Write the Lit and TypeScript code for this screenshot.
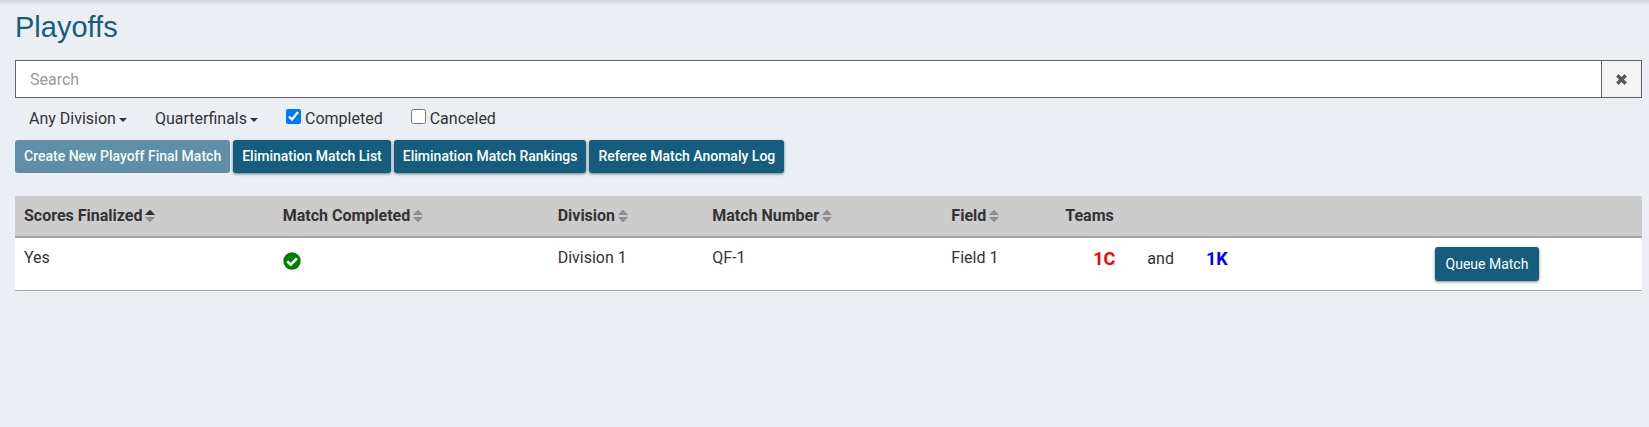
import { LitElement, html, css, svg } from "lit";
import { customElement, property } from "lit/decorators.js";

@customElement("sort-icon")
class SortIcon extends LitElement {
  @property({ type: Boolean }) ascending = false;

  static styles = css`
    :host {
      display: inline-block;
    }
    svg {
      display: block;
    }
    .arrow {
      fill: #8f8f8f;
    }
    .active {
      fill: #333;
    }
  `;

  render() {
    return html`<svg width="10" height="14" viewBox="0 0 10 14" aria-hidden="true">
      <path class="arrow ${this.ascending ? "active" : ""}" d="M.6 6 Q0 6 .3 5.4 L4.6 1.1 Q5 .7 5.4 1.1 L9.7 5.4 Q10 6 9.4 6Z" />
      <path class="arrow" d="M.6 8 Q0 8 .3 8.6 L4.6 12.9 Q5 13.3 5.4 12.9 L9.7 8.6 Q10 8 9.4 8Z" />
    </svg>`;
  }
}

interface Match {
  finalized: string;
  division: string;
  number: string;
  field: string;
  red: string;
  blue: string;
}

const columns = ["Scores Finalized", "Match Completed", "Division", "Match Number", "Field"];

const matches: Match[] = [
  { finalized: "Yes", division: "Division 1", number: "QF-1", field: "Field 1", red: "1C", blue: "1K" },
];

const cross = svg`<path d="M2.6 .4 5.5 3.3 8.4 .4 10.6 2.6 7.7 5.5 10.6 8.4 8.4 10.6 5.5 7.7 2.6 10.6 .4 8.4 3.3 5.5 .4 2.6Z"
  fill="#555" stroke="#555" stroke-width=".6" stroke-linejoin="round" />`;

@customElement("app-root")
class AppRoot extends LitElement {
  static styles = css`
    :host {
      display: block;
      box-sizing: border-box;
      min-height: 100vh;
      padding: 12px 7px 24px 15px;
      background: linear-gradient(#d3d6da, #ebeef3 6px) #ebeef3;
      color: #333;
      font: 16px/24px Roboto, sans-serif;
    }
    *,
    *::before {
      box-sizing: border-box;
    }
    h1 {
      margin: 0 0 18px;
      color: #155d7e;
      font: 400 29px/30px "Liberation Sans", Arial, sans-serif;
    }
    button,
    input {
      font: inherit;
      color: inherit;
    }
    .search {
      display: flex;
      height: 38px;
      border: 1px solid #5f6368;
      background: #fff;
    }
    .query {
      flex: 1;
      min-width: 0;
      border: 0;
      padding: 2px 14px 0;
      background: none;
    }
    .query::placeholder {
      color: #999;
      opacity: 1;
    }
    .clear {
      display: flex;
      align-items: center;
      justify-content: center;
      width: 40px;
      padding: 0;
      border: 0;
      border-left: 1px solid #5f6368;
      background: #f3f3f3;
    }
    .filters {
      display: flex;
      flex-wrap: wrap;
      align-items: center;
      gap: 0 28px;
      padding: 9px 14px;
    }
    .menu {
      display: flex;
      align-items: center;
      gap: 3px;
      padding: 0;
      border: 0;
      background: none;
    }
    .menu::after {
      content: "";
      border: 4px solid transparent;
      border-top-color: currentColor;
      border-bottom: 0;
      margin-top: 2px;
    }
    .check {
      display: flex;
      align-items: flex-start;
      gap: 4px;
    }
    .box {
      width: 15px;
      height: 15px;
      margin: 2px 0 0;
    }
    .actions {
      display: flex;
      flex-wrap: wrap;
      gap: 3px;
      margin-bottom: 23px;
    }
    .action {
      height: 33px;
      padding: 0 9px 2px;
      border: 0;
      border-radius: 3px;
      background: #155d7e;
      color: #fff;
      font-size: 14px;
      line-height: 20px;
      font-weight: 500;
      box-shadow: 0 1px 3px rgba(0, 0, 0, 0.5);
    }
    .action:disabled {
      opacity: 0.65;
      box-shadow: none;
    }
    table {
      width: 100%;
      table-layout: fixed;
      border-collapse: separate;
      border-spacing: 0;
      background: #fff;
    }
    th,
    td {
      padding: 8px 9px;
      text-align: left;
      vertical-align: top;
    }
    th {
      height: 42px;
      background: #ccc;
      border-bottom: 2px solid #a5a5a5;
      font-weight: 700;
    }
    td {
      height: 53px;
      border-bottom: 1px solid #a5a5a5;
    }
    .finalized {
      width: 15.9%;
    }
    .completed {
      width: 16.9%;
    }
    .division {
      width: 9.5%;
    }
    .number {
      width: 14.7%;
    }
    .field {
      width: 7%;
    }
    .teams {
      width: 22.7%;
    }
    .sort {
      display: flex;
      align-items: center;
      gap: 3px;
      padding: 0;
      border: 0;
      background: none;
    }
    .done {
      display: block;
      margin-top: 6px;
    }
    .versus {
      display: flex;
      align-items: center;
      gap: 32px;
      padding: 1px 28px 0;
    }
    .red,
    .blue {
      font-size: 18px;
      font-weight: 700;
    }
    .red {
      color: #f00;
    }
    .blue {
      color: #00f;
    }
    .run {
      padding-top: 9px;
    }
    .queue {
      height: 34px;
      padding: 0 11px;
      font-weight: 400;
    }
  `;

  render() {
    return html`
      <h1>Playoffs</h1>
      <div class="search">
        <input class="query" type="text" placeholder="Search" aria-label="Search" />
        <button class="clear" aria-label="Clear search">
          <svg width="11" height="11" viewBox="0 0 11 11">${cross}</svg>
        </button>
      </div>
      <div class="filters">
        <button class="menu">Any Division</button>
        <button class="menu">Quarterfinals</button>
        <label class="check"><input class="box" type="checkbox" checked />Completed</label>
        <label class="check"><input class="box" type="checkbox" />Canceled</label>
      </div>
      <div class="actions">
        <button class="action" disabled>Create New Playoff Final Match</button>
        <button class="action">Elimination Match List</button>
        <button class="action">Elimination Match Rankings</button>
        <button class="action">Referee Match Anomaly Log</button>
      </div>
      <table>
        <colgroup>
          <col class="finalized" />
          <col class="completed" />
          <col class="division" />
          <col class="number" />
          <col class="field" />
          <col class="teams" />
          <col />
        </colgroup>
        <thead>
          <tr>
            ${columns.map(
              (name, i) => html`<th>
                <button class="sort">${name}<sort-icon ?ascending=${i === 0}></sort-icon></button>
              </th>`
            )}
            <th>Teams</th>
            <th></th>
          </tr>
        </thead>
        <tbody>
          ${matches.map(
            (m) => html`<tr>
              <td>${m.finalized}</td>
              <td>
                <svg class="done" width="18" height="18" viewBox="0 0 18 18" role="img" aria-label="Completed">
                  <circle cx="9" cy="9" r="8.7" fill="#008000" />
                  <path d="M4.2 9.2 7.7 12.6 14 6.4" fill="none" stroke="#fff" stroke-width="2.7" />
                </svg>
              </td>
              <td>${m.division}</td>
              <td>${m.number}</td>
              <td>${m.field}</td>
              <td>
                <div class="versus">
                  <span class="red">${m.red}</span><span>and</span><span class="blue">${m.blue}</span>
                </div>
              </td>
              <td class="run"><button class="action queue">Queue Match</button></td>
            </tr>`
          )}
        </tbody>
      </table>
    `;
  }
}
